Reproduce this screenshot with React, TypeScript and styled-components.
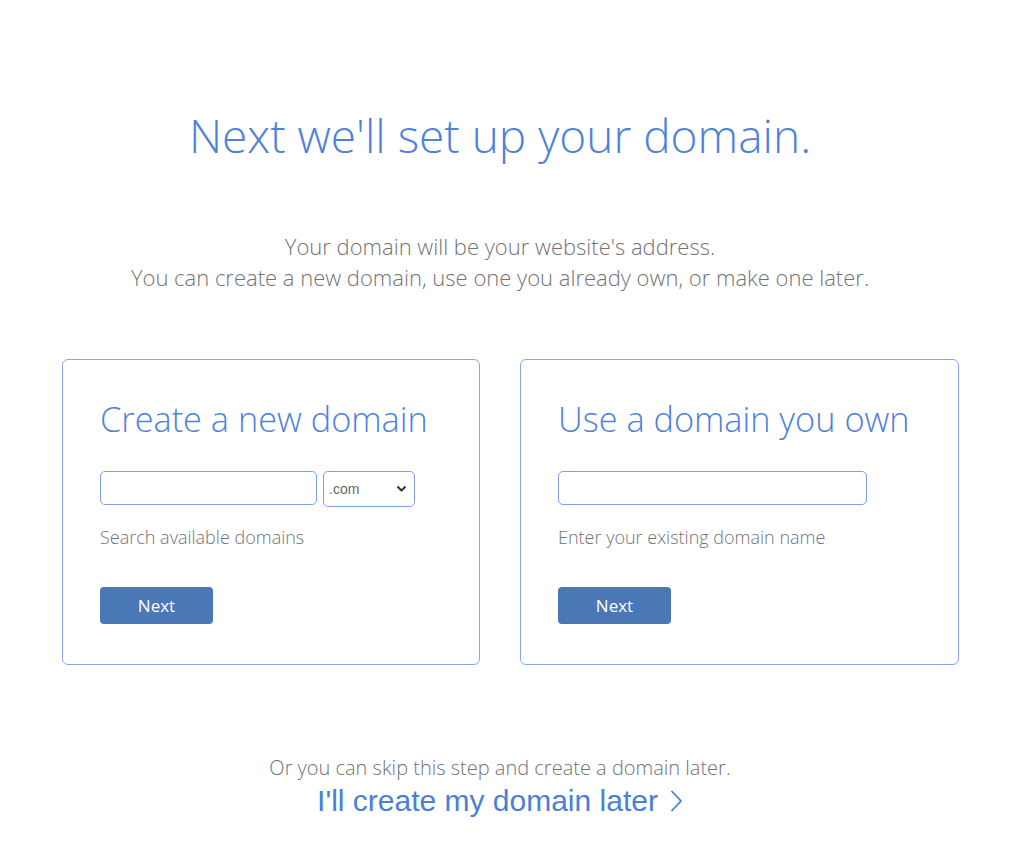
import styled, { createGlobalStyle } from 'styled-components';

const GlobalStyle = createGlobalStyle`
  html, body {
    margin: 0;
    padding: 0;
    background: #ffffff;
  }
  body {
    font-family: 'Open Sans', 'Liberation Sans', sans-serif;
  }
  * {
    box-sizing: border-box;
  }
`;

const Page = styled.div`
  display: flex;
  flex-direction: column;
  align-items: center;
  padding: 104px 24px 0 0;
`;

const Title = styled.h1`
  margin: 0;
  font-family: 'Open Sans', sans-serif;
  font-weight: 300;
  font-size: 46px;
  line-height: 62px;
  color: #4f82d8;
`;

const Intro = styled.p`
  margin: 65px 0 0;
  text-align: center;
  font-family: 'Open Sans', sans-serif;
  font-weight: 300;
  font-size: 22px;
  line-height: 31px;
  color: #737373;
`;

const Cards = styled.div`
  display: grid;
  grid-template-columns: 418px 439px;
  gap: 40px;
  margin: 66px 0 0 21px;
`;

const Card = styled.section`
  border: 1px solid #86a8e6;
  border-radius: 6px;
  height: 306px;
  padding: 35px 37px 0;
`;

const CardTitle = styled.h2`
  margin: 0;
  font-family: 'Open Sans', sans-serif;
  font-weight: 300;
  font-size: 34.3px;
  line-height: 48px;
  color: #4f82d8;
`;

const FieldRow = styled.div`
  display: flex;
  gap: 6px;
  height: 34px;
  margin-top: 28px;
  align-items: flex-start;
`;

const TextInput = styled.input<{ $width: number }>`
  width: ${(p) => p.$width}px;
  height: 34px;
  border: 1px solid #7ea2e0;
  border-radius: 5px;
  background: #fff;
  padding: 0 8px;
  outline: none;
`;

const SelectBox = styled.div`
  position: relative;
  flex: none;
  width: 92px;
  height: 36px;
`;

const Select = styled.select`
  appearance: none;
  width: 100%;
  height: 100%;
  border: 1px solid #7ea2e0;
  border-radius: 5px;
  background: #fff;
  padding: 0 0 0 5px;
  font-family: 'Liberation Sans', Arial, sans-serif;
  font-size: 14px;
  color: #666;
  outline: none;
`;

const Chevron = styled.svg`
  position: absolute;
  right: 8px;
  top: 14px;
  pointer-events: none;
`;

const Hint = styled.div`
  margin-top: 20px;
  font-family: 'Open Sans', sans-serif;
  font-weight: 300;
  font-size: 18px;
  line-height: 24px;
  color: #737373;
`;

const NextButton = styled.button`
  display: block;
  margin-top: 38px;
  width: 113px;
  height: 37px;
  border: none;
  border-radius: 4px;
  background: #4a78b6;
  color: #fff;
  font-family: 'Open Sans', sans-serif;
  font-weight: 400;
  font-size: 17px;
  cursor: pointer;
`;

const Skip = styled.p`
  margin: 90px 0 0;
  font-family: 'Open Sans', sans-serif;
  font-weight: 300;
  font-size: 20px;
  line-height: 26px;
  color: #737373;
`;

const LaterLink = styled.a`
  display: flex;
  align-items: center;
  gap: 12px;
  margin-top: 2px;
  font-family: 'Liberation Sans', Arial, sans-serif;
  font-size: 30px;
  line-height: 36px;
  color: #4a7fd6;
  text-decoration: none;
`;

export default function App() {
  return (
    <>
      <GlobalStyle />
      <Page>
        <Title>Next we'll set up your domain.</Title>
        <Intro>
          Your domain will be your website's address.
          <br />
          You can create a new domain, use one you already own, or make one later.
        </Intro>

        <Cards>
          <Card>
            <CardTitle>Create a new domain</CardTitle>
            <FieldRow>
              <TextInput $width={217} type="text" />
              <SelectBox>
                <Select defaultValue=".com">
                  <option>.com</option>
                  <option>.net</option>
                  <option>.org</option>
                </Select>
                <Chevron width="11" height="8" viewBox="0 0 11 8">
                  <path d="M1.5 1.5 L5.5 5.5 L9.5 1.5" fill="none" stroke="#333" strokeWidth="2" />
                </Chevron>
              </SelectBox>
            </FieldRow>
            <Hint>Search available domains</Hint>
            <NextButton>Next</NextButton>
          </Card>

          <Card>
            <CardTitle>Use a domain you own</CardTitle>
            <FieldRow>
              <TextInput $width={309} type="text" />
            </FieldRow>
            <Hint>Enter your existing domain name</Hint>
            <NextButton>Next</NextButton>
          </Card>
        </Cards>

        <Skip>Or you can skip this step and create a domain later.</Skip>
        <LaterLink href="#">
          I'll create my domain later
          <svg width="13" height="24" viewBox="0 0 13 24">
            <path d="M1.5 2 L11 12 L1.5 22" fill="none" stroke="#4a7fd6" strokeWidth="1.8" />
          </svg>
        </LaterLink>
      </Page>
    </>
  );
}
